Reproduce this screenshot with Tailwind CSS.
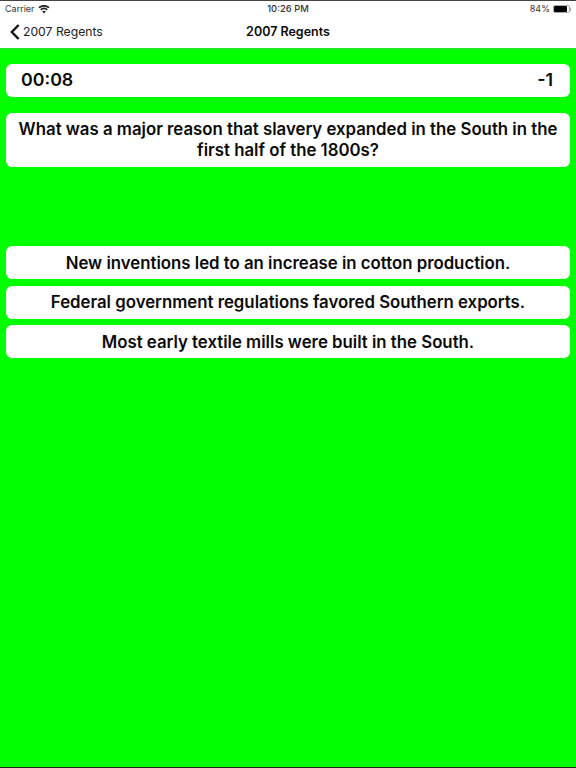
<!doctype html>
<html>
<head>
<meta charset="utf-8">
<script src="https://cdn.jsdelivr.net/npm/@tailwindcss/browser@4"></script>
</head>
<body class="m-0 bg-[#00ff00]">
<div class="w-[576px] h-[768px] flex flex-col overflow-hidden font-['Inter','Liberation_Sans',sans-serif] text-[#0a0a0a]">
  <div class="h-px bg-[#444444]"></div>
  <header class="bg-white h-[48px] flex flex-col border-b border-[#33e033]">
    <div class="h-[15px] pt-px px-[5px] flex items-center justify-between relative text-[9px] text-[#333333]">
      <div class="flex items-center gap-[3px]">
        <span>Carrier</span>
        <svg width="12" height="9" viewBox="0 0 12 9"><path d="M6 8.6 L4.2 6.4 A3 3 0 0 1 7.8 6.4 Z M3.3 5.4 L2.2 4.1 A5.8 5.8 0 0 1 9.8 4.1 L8.7 5.4 A4.2 4.2 0 0 0 3.3 5.4 Z M1.5 3.3 L0.4 2 A8.6 8.6 0 0 1 11.6 2 L10.5 3.3 A7 7 0 0 0 1.5 3.3 Z" fill="#222222"/></svg>
      </div>
      <span class="absolute left-0 right-0 text-center text-[9.4px] font-medium">10:26 PM</span>
      <div class="flex items-center gap-[3px]">
        <span>84%</span>
        <div class="flex items-center">
          <div class="w-[17px] h-[8px] rounded-[2px] border border-[#aaaaaa] flex items-stretch"><div class="w-[13px] bg-black rounded-[1px]"></div></div>
          <div class="w-px h-[3px] bg-[#aaaaaa]"></div>
        </div>
      </div>
    </div>
    <div class="flex-1 flex items-center justify-between relative pl-[10px]">
      <div class="flex items-center gap-[3px] text-[12.2px] text-[#222222]">
        <svg width="10" height="16" viewBox="0 0 10 16"><path d="M8.6 1 L1.8 8 L8.6 15" fill="none" stroke="#111111" stroke-width="2.4"/></svg>
        <span>2007 Regents</span>
      </div>
      <span class="absolute left-0 right-0 text-center text-[12.5px] font-semibold">2007 Regents</span>
    </div>
  </header>
  <main class="flex-1 bg-[#00ff00] px-[6px] pt-[15px] flex flex-col">
    <div class="h-[33px] bg-white rounded-[6px] flex items-center justify-between pl-[15px] pr-[17px] text-[17.8px] font-semibold">
      <span>00:08</span>
      <span>-1</span>
    </div>
    <div class="mt-[16px] h-[54px] bg-white rounded-[6px] flex items-center justify-center text-center text-[16.8px] leading-[21px] font-semibold">
      <p>What was a major reason that slavery expanded in the South in the first half of the 1800s?</p>
    </div>
    <div class="mt-[79px] flex flex-col gap-[6.5px]">
      <div class="h-[33px] pt-[2px] bg-white rounded-[6px] flex items-center justify-center text-[16.8px] font-semibold">New inventions led to an increase in cotton production.</div>
      <div class="h-[33px] pt-[2px] bg-white rounded-[6px] flex items-center justify-center text-[16.8px] font-semibold">Federal government regulations favored Southern exports.</div>
      <div class="h-[33px] pt-[2px] bg-white rounded-[6px] flex items-center justify-center text-[16.8px] font-semibold">Most early textile mills were built in the South.</div>
    </div>
  </main>
  <div class="h-px bg-[#222222]"></div>
</div>
</body>
</html>
